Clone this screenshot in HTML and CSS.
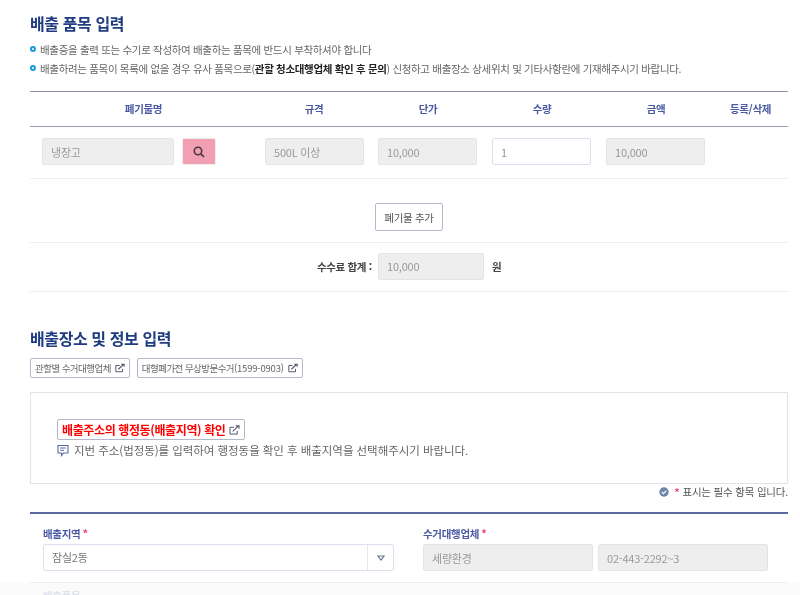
FILE: index.html
```html
<!DOCTYPE html>
<html lang="ko">
<head>
<meta charset="utf-8">
<title>배출 품목 입력</title>
<link rel="stylesheet" href="styles.css">
</head>
<body>
<main class="page">
  <h2 class="title">배출 품목 입력</h2>
  <ul class="notes">
    <li>배출증을 출력 또는 수기로 작성하여 배출하는 품목에 반드시 부착하셔야 합니다</li>
    <li>배출하려는 품목이 목록에 없을 경우 유사 품목으로(<b>관할 청소대행업체 확인 후 문의</b>) 신청하고 배출장소 상세위치 및 기타사항란에 기재해주시기 바랍니다.</li>
  </ul>

  <div class="grid head">
    <div>폐기물명</div><div>규격</div><div>단가</div><div>수량</div><div>금액</div><div>등록/삭제</div>
  </div>
  <div class="grid row">
    <div class="name-cell">
      <span class="field off name">냉장고</span>
      <span class="search">
        <svg width="12" height="12" viewBox="0 0 12 12"><circle cx="5" cy="5" r="3.7" fill="none" stroke="#4a3a44" stroke-width="1.6"/><path d="M7.8 7.8 11 11" stroke="#4a3a44" stroke-width="1.7"/></svg>
      </span>
    </div>
    <div class="cell first"><span class="field off">500L 이상</span></div>
    <div class="cell"><span class="field off">10,000</span></div>
    <div class="cell"><span class="field on">1</span></div>
    <div class="cell"><span class="field off">10,000</span></div>
    <div></div>
  </div>
  <div class="add-row"><span class="add">폐기물 추가</span></div>
  <div class="sum-row">
    <b class="sum-label">수수료 합계 :</b>
    <span class="field off sum">10,000</span>
    <b class="won">원</b>
  </div>

  <h2 class="title second">배출장소 및 정보 입력</h2>
  <div class="links">
    <span class="link">관할별 수거대행업체
      <svg class="ext" width="10" height="10" viewBox="0 0 12 11"><path d="M9 6.5V10H1V2.5h4.5" fill="none" stroke="#555b6e" stroke-width="1.2"/><path d="M4 7 10.5 1M7.5 1h3.5v3" fill="none" stroke="#555b6e" stroke-width="1.3"/></svg>
    </span>
    <span class="link"><span>대형폐가전 무상방문수거<span class="tel">(1599-0903)</span></span>
      <svg class="ext" width="10" height="10" viewBox="0 0 12 11"><path d="M9 6.5V10H1V2.5h4.5" fill="none" stroke="#555b6e" stroke-width="1.2"/><path d="M4 7 10.5 1M7.5 1h3.5v3" fill="none" stroke="#555b6e" stroke-width="1.3"/></svg>
    </span>
  </div>

  <section class="box">
    <span class="check"><b>배출주소의 행정동(배출지역) 확인</b>
      <svg class="ext" width="11" height="10" viewBox="0 0 12 11"><path d="M9 6.5V10H1V2.5h4.5" fill="none" stroke="#555b6e" stroke-width="1.1"/><path d="M4 7 10.5 1M7.5 1h3.5v3" fill="none" stroke="#555b6e" stroke-width="1.2"/></svg>
    </span>
    <p class="hint">
      <svg width="12" height="13" viewBox="0 0 12 13"><path d="M1 1.5h10v7.5H6.5L4.5 11.5V9H1z" fill="none" stroke="#5a68a8" stroke-width="1.1"/><path d="M3.2 4h5.6M3.2 6.3h3.8" stroke="#5a68a8" stroke-width="1"/></svg>
      지번 주소(법정동)를 입력하여 행정동을 확인 후 배출지역을 선택해주시기 바랍니다.
    </p>
  </section>
  <p class="required">
    <svg class="req-icon" width="10" height="10" viewBox="0 0 10 10"><circle cx="5" cy="5" r="4.7" fill="#6f84a8"/><path d="M2.8 5 4.5 6.6 7.3 3.6" fill="none" stroke="#fff" stroke-width="1.1"/></svg>
    <i class="star">*</i> 표시는 필수 항목 입니다.
  </p>

  <div class="form-row">
    <div class="area">
      <label class="label">배출지역<i class="star">*</i></label>
      <div class="select">
        <span class="select-value">잠실2동</span>
        <span class="select-arrow"><svg width="8" height="6" viewBox="0 0 8 6"><path d="M1 1h6L4 5z" fill="none" stroke="#6a7390" stroke-width="1.2"/></svg></span>
      </div>
    </div>
    <div class="agency">
      <label class="label">수거대행업체<i class="star">*</i></label>
      <div class="agency-fields">
        <span class="field off">세량환경</span>
        <span class="field off">02-443-2292~3</span>
      </div>
    </div>
  </div>
  <div class="next-row"><label class="label">배출품목</label></div>
</main>
<div class="fade"></div>
</body>
</html>
```
FILE: styles.css
```css
* { box-sizing: border-box; }
html, body { height: 595px; overflow: hidden; }
body {
  margin: 0;
  background: #fff;
  color: #555;
  font-family: "Noto Sans CJK KR", "Noto Sans", sans-serif;
  font-size: 10.5px;
  position: relative;
}
.page { width: 758px; margin-left: 30px; padding-top: 11px; filter: blur(0.5px); }
h2, p, ul { margin: 0; padding: 0; }
i { font-style: normal; }

.title { color: #1f3c80; font-size: 16px; font-weight: 700; line-height: 24px; letter-spacing: -0.4px; }
.second { margin-top: 34px; }

.notes { list-style: none; margin-top: 5px; }
.notes li {
  height: 19px; line-height: 19px; padding-left: 10px; position: relative;
  color: #666; letter-spacing: -0.33px; white-space: nowrap;
}
.notes li::before {
  content: ""; position: absolute; left: 0; top: 6px; box-sizing: border-box;
  width: 6px; height: 6px; border-radius: 50%;
  border: 2px solid #1a9ae0; background: #fff;
}
.notes b { color: #222; }

.grid { display: grid; grid-template-columns: 227px 114px 114px 114px 114px 75px; }
.head {
  margin-top: 13px; height: 36px; padding-bottom: 2px; align-items: center; text-align: center;
  border-top: 1px solid #8e93ab; border-bottom: 1.5px solid #9a9db8;
  color: #4b5aa3; font-weight: 700; letter-spacing: -0.3px;
}
.row { height: 52px; align-items: start; padding-top: 11px; border-bottom: 1px solid #f0f0f0; }
.name-cell { display: flex; gap: 8px; padding-left: 12px; }
.cell { padding-left: 7px; }
.cell.first { padding-left: 8px; }

.field {
  display: flex; align-items: center; width: 99px; height: 27px; padding-left: 8px;
  border: 1px solid #e4e4e4; border-radius: 2px; color: #999; font-size: 11px; letter-spacing: -0.2px;
}
.off { background: #eee; }
.on { background: #fff; border-color: #dcdfee; }
.name { width: 132px; }
.search {
  display: flex; align-items: center; justify-content: center;
  width: 34px; height: 27px; background: #f29fb3; border: 1px solid #eee; border-radius: 2px;
}

.add-row { height: 64px; display: flex; align-items: flex-start; justify-content: center; padding-top: 24px; border-bottom: 1px solid #eee; }
.add {
  display: flex; align-items: center; justify-content: center;
  width: 68px; height: 28px; border: 1px solid #b4b8c8; border-radius: 2px; color: #555; letter-spacing: -0.3px;
}
.sum-row { height: 49px; display: flex; align-items: center; padding: 0 0 2px 287px; border-bottom: 1px solid #eee; }
.sum-label { color: #444; width: 55px; white-space: nowrap; letter-spacing: -0.35px; }
.sum { width: 106px; margin-left: 6px; }
.won { margin-left: 8px; color: #444; }

.links { display: flex; gap: 7px; margin-top: 8px; }
.link {
  display: flex; align-items: center; gap: 4px; height: 20px; padding: 0 4px;
  border: 1px solid #b4b8c8; border-radius: 2px; color: #666; font-size: 9.5px; letter-spacing: -0.55px; white-space: nowrap;
}
.tel { letter-spacing: -0.2px; }

.box { height: 92px; margin-top: 14px; padding: 26px 0 0 26px; border: 1px solid #e2e3ea; }
.check {
  display: inline-flex; align-items: center; gap: 3px; height: 21px; padding: 0 4px;
  border: 1px solid #b4b8c8; border-radius: 2px; letter-spacing: -0.38px; white-space: nowrap;
}
.check b { color: #f00; font-size: 12px; }
.hint { display: flex; align-items: center; gap: 5px; margin-top: 1px; color: #666; font-size: 11.5px; letter-spacing: -0.05px; height: 18px; }

.required {
  display: flex; justify-content: flex-end; align-items: center; gap: 4px;
  height: 15px; color: #555; font-size: 10.5px; letter-spacing: -0.2px;
}
.req-icon { margin-right: 1px; }
.required .star { margin-right: -1px; }
.star { color: #f0466e; font-weight: 700; }

.form-row {
  display: flex; margin-top: 13px; height: 71px; padding: 11px 0 0 13px;
  border-top: 2px solid #5a6aa0; border-bottom: 1px solid #eee;
}
.label { display: block; height: 19px; line-height: 16px; color: #4b5aa3; font-weight: 700; letter-spacing: -0.3px; }
.label .star { margin-left: 2px; font-size: 11px; }
.area { width: 351px; }
.select { display: flex; height: 27px; border: 1px solid #dcdfee; border-radius: 2px; color: #777; font-size: 11px; letter-spacing: -0.2px; }
.select-value { flex: 1; padding-left: 8px; line-height: 25px; }
.select-arrow { display: flex; align-items: center; justify-content: center; width: 26px; border-left: 1px solid #e6e6ee; }
.agency { margin-left: 29px; }
.agency-fields { display: flex; gap: 5px; }
.agency-fields .field { width: 170px; height: 27px; }
.next-row { padding: 5px 0 0 13px; opacity: .6; }
.fade { position: absolute; left: 0; right: 0; bottom: 0; height: 12px; background: linear-gradient(rgba(250,250,250,.9), rgba(250,250,250,.7)); }
```
